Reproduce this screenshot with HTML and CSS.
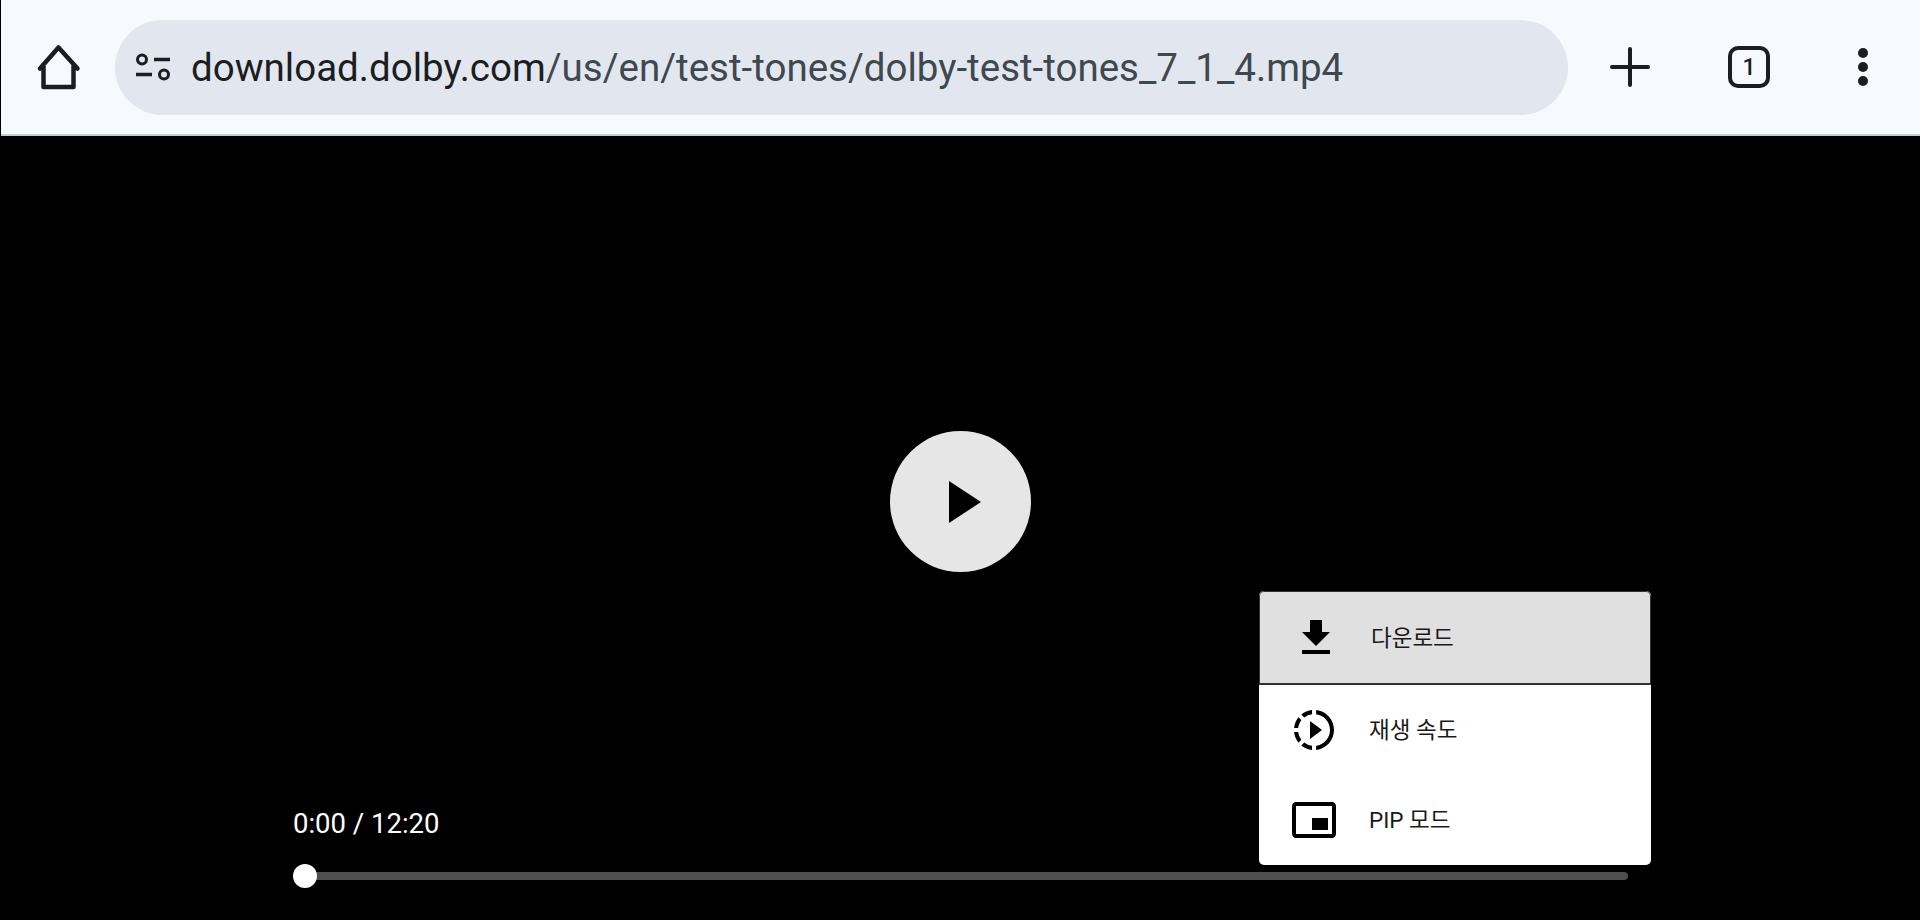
FILE: index.html
```html
<!DOCTYPE html>
<html lang="ko">
<head>
    <meta charset="UTF-8">
    <title>dolby-test-tones_7_1_4.mp4</title>
    <link rel="stylesheet" href="styles.css">
</head>
<body>
    <!-- Browser toolbar -->
    <header class="toolbar">
        <svg class="home-icon" width="50" height="50" viewBox="0 0 50 50">
            <path d="M7 26.5 L25.5 5.5 L44.5 26.5 M10.5 24 V45 H40.5 V24" fill="none" stroke="#1b1d20" stroke-width="4.5" stroke-linecap="round" stroke-linejoin="round"/>
        </svg>
        <div class="url-bar">
            <svg class="tune-icon" width="38" height="32" viewBox="0 0 38 32">
                <circle cx="8" cy="8.5" r="4.5" fill="none" stroke="#1b1d20" stroke-width="3"/>
                <path d="M20 8.5 H36 M2 23.5 H18" stroke="#1b1d20" stroke-width="3.5"/>
                <circle cx="30" cy="23.5" r="4.5" fill="none" stroke="#1b1d20" stroke-width="3"/>
            </svg>
            <span class="url-text"><span class="url-host">download.dolby.com</span>/us/en/test-tones/dolby-test-tones_7_1_4.mp4</span>
        </div>
        <svg class="plus-icon" width="42" height="40" viewBox="0 0 42 40">
            <path d="M3 20 H39 M21 2 V38" stroke="#1b1d20" stroke-width="4" stroke-linecap="round"/>
        </svg>
        <div class="tab-count">1</div>
        <svg class="more-icon" width="10" height="38" viewBox="0 0 10 38">
            <circle cx="5" cy="5" r="5" fill="#1b1d20"/>
            <circle cx="5" cy="19" r="5" fill="#1b1d20"/>
            <circle cx="5" cy="33" r="5" fill="#1b1d20"/>
        </svg>
    </header>

    <!-- Video player -->
    <main class="player">
        <div class="stage">
            <div class="play-btn">
                <svg width="32" height="42" viewBox="0 0 32 42"><path d="M0 0 L32 21 L0 42 Z" fill="#000"/></svg>
            </div>
        </div>
        <div class="controls">
            <div class="time">0:00 / 12:20</div>
            <div class="seek">
                <div class="seek-track"></div>
                <div class="seek-thumb"></div>
            </div>
        </div>

        <!-- Overflow menu -->
        <ul class="menu">
            <li class="menu-item active">
                <svg width="48" height="48" viewBox="0 0 24 24"><path d="M19 9h-4V3H9v6H5l7 7 7-7zM5 18v2h14v-2H5z"/></svg>
                <span>다운로드</span>
            </li>
            <li class="menu-item">
                <svg width="48" height="48" viewBox="0 0 24 24"><path d="M10 7.5v9l6-4.5zM11 4.07V2.05c-2.01.2-3.84 1-5.32 2.21L7.1 5.69A7.941 7.941 0 0 1 11 4.07zM5.69 7.1L4.26 5.68A9.949 9.949 0 0 0 2.05 11h2.02c.18-1.46.76-2.79 1.62-3.9zM4.07 13H2.05c.2 2.01 1 3.84 2.21 5.32l1.43-1.43A7.868 7.868 0 0 1 4.07 13zm1.61 6.74A9.981 9.981 0 0 0 11 21.95v-2.02a7.941 7.941 0 0 1-3.9-1.62l-1.42 1.43zM22 12c0 5.16-3.92 9.42-8.95 9.95v-2.02C16.97 19.41 20 16.05 20 12s-3.03-7.41-6.95-7.93V2.05C18.08 2.58 22 6.84 22 12z"/></svg>
                <span>재생 속도</span>
            </li>
            <li class="menu-item">
                <svg width="48" height="48" viewBox="0 0 24 24"><path d="M19 11h-8v6h8v-6zm4 8V4.98C23 3.88 22.1 3 21 3H3c-1.1 0-2 .88-2 1.98V19c0 1.1.9 2 2 2h18c1.1 0 2-.9 2-2zm-2 .02H3V4.97h18v14.05z"/></svg>
                <span>PIP 모드</span>
            </li>
        </ul>
    </main>
</body>
</html>
```

FILE: styles.css
```css
* {
    margin: 0;
    padding: 0;
    box-sizing: border-box;
}

body {
    height: 100vh;
    display: flex;
    flex-direction: column;
    background: #000;
    font-family: Roboto, "Noto Sans CJK KR", sans-serif;
    overflow: hidden;
}

/* Toolbar */
.toolbar {
    height: 136px;
    margin-left: 1px;
    display: flex;
    align-items: center;
    background: #f6f9fe;
    border-bottom: 2px solid #c9cbce;
}

.home-icon {
    margin-left: 32px;
}

.url-bar {
    width: 1453px;
    height: 95px;
    margin-left: 32px;
    padding-left: 19px;
    display: flex;
    align-items: center;
    background: #e2e7ef;
    border-radius: 48px;
}

.url-text {
    margin-left: 19px;
    font-size: 38.5px;
    color: #3f474f;
    white-space: nowrap;
}

.url-host {
    color: #1b1d20;
}

.plus-icon {
    margin-left: 41px;
}

.tab-count {
    width: 42px;
    height: 42px;
    margin-left: 77px;
    display: flex;
    align-items: center;
    justify-content: center;
    border: 4px solid #1b1d20;
    border-radius: 10px;
    font-size: 23px;
    font-weight: 500;
    color: #1b1d20;
}

.more-icon {
    margin-left: 88px;
}

/* Player */
.player {
    flex: 1;
    position: relative;
    display: flex;
    flex-direction: column;
}

.stage {
    flex: 1;
    padding-top: 60px;
    display: flex;
    align-items: center;
    justify-content: center;
}

.play-btn {
    width: 141px;
    height: 141px;
    padding-left: 10px;
    display: flex;
    align-items: center;
    justify-content: center;
    background: #e6e6e6;
    border-radius: 50%;
}

.controls {
    padding: 0 292px 32px 293px;
}

.time {
    margin-top: 1px;
    font-size: 27.5px;
    line-height: 32px;
    color: #fff;
}

.seek {
    position: relative;
    height: 24px;
    margin-top: 24px;
    display: flex;
    align-items: center;
}

.seek-track {
    flex: 1;
    height: 8px;
    margin-left: 7px;
    background: #4f4f4f;
    border-radius: 4px;
}

.seek-thumb {
    position: absolute;
    left: 0;
    top: 0;
    width: 24px;
    height: 24px;
    background: #fff;
    border-radius: 50%;
}

/* Menu */
.menu {
    position: absolute;
    right: 269px;
    bottom: 55px;
    width: 392px;
    list-style: none;
    background: #fff;
    border-radius: 5px;
    overflow: hidden;
}

.menu-item {
    height: 90px;
    padding-left: 31px;
    display: flex;
    align-items: center;
    gap: 31px;
    font-size: 22.5px;
    color: #1a1a1a;
}

.menu-item span {
    margin-bottom: 4px;
}

.menu-item.active {
    height: 94px;
    padding-left: 32px;
    gap: 31px;
    background: #e0e0e0;
    border: 1px solid #333;
    border-bottom-width: 2px;
    border-radius: 5px 5px 0 0;
}
```
